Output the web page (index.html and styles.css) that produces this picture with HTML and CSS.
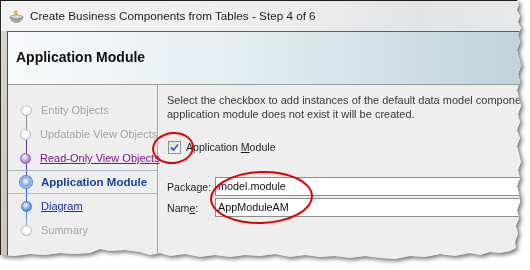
FILE: index.html
```html
<!DOCTYPE html>
<html lang="en">
<head>
  <meta charset="UTF-8" />
  <title>Create Business Components from Tables - Step 4 of 6</title>
  <link rel="stylesheet" href="styles.css">
</head>
<body>
  <div class="shot">
    <div class="window">
      <div class="titlebar">
        <svg class="app-icon" width="15" height="14" viewBox="0 0 15 14">
          <path d="M5 2 Q6 0 8 1 Q7 3 9 4 L6 5 Z" fill="#f2c43a" stroke="#c8901a" stroke-width="0.5"/>
          <ellipse cx="7.5" cy="7" rx="6.5" ry="2" fill="#d8d8d0" stroke="#8a8a80" stroke-width="0.6"/>
          <path d="M1 7 Q2 12 7.5 12.5 Q13 12 14 7 Q11 9 7.5 9 Q4 9 1 7 Z" fill="#a8a89c" stroke="#70706a" stroke-width="0.5"/>
        </svg>
        <span class="title">Create Business Components from Tables - Step 4 of 6</span>
      </div>
      <div class="dialog">
        <div class="header">
          <h1>Application Module</h1>
        </div>
        <div class="main">
          <ul class="steps">
            <li class="todo"><span class="node"><span class="dot"></span></span>Entity Objects</li>
            <li class="todo"><span class="node"><span class="dot"></span></span>Updatable View Objects</li>
            <li class="visited"><span class="node"><span class="dot"></span></span><a href="#">Read-Only View Objects</a></li>
            <li class="current"><span class="node"><span class="dot"></span></span>Application Module</li>
            <li class="done"><span class="node"><span class="dot"></span></span><a href="#">Diagram</a></li>
            <li class="todo"><span class="node"><span class="dot"></span></span>Summary</li>
          </ul>
          <div class="content">
            <p class="intro">Select the checkbox to add instances of the default data model components. If the<br>application module does not exist it will be created.</p>
            <label class="check-row">
              <span class="checkbox">
                <svg width="9" height="9" viewBox="0 0 9 9"><path d="M1 4.5 L3.5 7 L8 1.5" fill="none" stroke="#2f5fc4" stroke-width="1.8"/></svg>
              </span>
              <span>Application <u>M</u>odule</span>
            </label>
            <div class="form">
              <span class="label">Packa<u>g</u>e:</span>
              <div class="field">model.module</div>
              <span class="label">Nam<u>e</u>:</span>
              <div class="field">AppModuleAM</div>
            </div>
          </div>
        </div>
      </div>
    </div>
    <span class="mark mark-check"></span>
    <span class="mark mark-fields"></span>
  </div>
</body>
</html>
```

FILE: styles.css
```css
body {
  margin: 0;
  background: #ffffff;
  font-family: 'Liberation Sans', Arial, sans-serif;
}
.shot {
  position: relative;
  width: 530px;
  height: 270px;
  overflow: hidden;
  filter: drop-shadow(2px 2px 2px rgba(0, 0, 0, 0.55));
}
.window {
  width: 522px;
  height: 262px;
  box-sizing: border-box;
  border-top: 1px solid #1e1e1e;
  border-left: 1px solid #2a2a2a;
  background: linear-gradient(#d9d6d0, #cbc5bc);
  display: flex;
  flex-direction: column;
  clip-path: polygon(0 0, 517px 0, 519px 4px, 517px 10px, 520px 16px, 518px 22px, 521px 28px, 518px 35px, 520px 42px, 517px 50px, 519px 58px, 521px 66px, 518px 74px, 520px 82px, 517px 90px, 519px 98px, 521px 106px, 518px 114px, 520px 122px, 517px 130px, 520px 138px, 517px 146px, 519px 154px, 521px 162px, 518px 170px, 520px 178px, 517px 186px, 519px 194px, 520px 202px, 517px 210px, 519px 218px, 516px 226px, 518px 234px, 515px 242px, 516px 248px, 510px 251px, 500px 253px, 490px 252px, 480px 255px, 470px 253px, 455px 256px, 440px 254px, 425px 257px, 410px 256px, 395px 259px, 380px 258px, 365px 256px, 350px 258px, 335px 256px, 320px 257px, 305px 255px, 290px 257px, 275px 254px, 260px 256px, 245px 255px, 230px 257px, 215px 255px, 200px 257px, 185px 254px, 170px 256px, 160px 253px, 150px 255px, 140px 252px, 125px 250px, 110px 251px, 100px 249px, 90px 253px, 75px 254px, 60px 253px, 45px 255px, 30px 254px, 15px 256px, 0 255px);
}
.titlebar {
  height: 30px;
  display: flex;
  align-items: center;
  padding-left: 8px;
  background: linear-gradient(90deg, #f3f3f3 0%, #eeeeee 55%, #e2e4e6 80%, #e8e9ea 100%);
}
.app-icon {
  margin-top: 1px;
}
.title {
  margin-left: 6px;
  font-size: 11.7px;
  color: #1b1b1b;
  padding-bottom: 2px;
}
.dialog {
  flex: 1;
  margin-left: 6px;
  border-left: 1px solid #4a4a4a;
  border-top: 1px solid #5c5c5c;
  background: #eeeeee;
  display: flex;
  flex-direction: column;
}
.header {
  height: 52px;
  border-bottom: 1px solid #9c9c9c;
  background: linear-gradient(90deg, #f9fafb 0%, #e4edf1 45%, #c0d4dd 100%);
  display: flex;
  align-items: center;
  padding-left: 8px;
}
h1 {
  margin: 0;
  font-size: 14px;
  font-weight: bold;
  color: #111;
  padding-bottom: 2px;
}
.main {
  flex: 1;
  display: flex;
}
.steps {
  list-style: none;
  margin: 0;
  padding: 13px 0 0;
  width: 149px;
  border-right: 1px solid #a6a6a6;
}
.steps li {
  position: relative;
  height: 24px;
  box-sizing: border-box;
  display: flex;
  align-items: center;
  font-size: 11px;
  color: #a6a6a6;
  white-space: nowrap;
}
.steps li::before,
.steps li::after {
  content: '';
  position: absolute;
  left: 18px;
  width: 1px;
}
.steps li::before {
  top: 0;
  height: 50%;
}
.steps li::after {
  top: 50%;
  bottom: 0;
}
.steps li:nth-child(1)::after { background: #8e8e8e; }
.steps li:nth-child(2)::before { background: #8e8e8e; }
.steps li:nth-child(2)::after { background: #6b2b9b; }
.steps li:nth-child(3)::before { background: #6b2b9b; }
.steps li:nth-child(3)::after { background: #5a3cb4; }
.steps li:nth-child(4)::before { background: #4c4cc4; }
.steps li:nth-child(4)::after { background: #3560d2; }
.steps li:nth-child(5)::before { background: #3560d2; }
.steps li:nth-child(5)::after { background: #5a82d6; }
.steps li:nth-child(6)::before { background: #8aa4d8; }
.node {
  position: relative;
  z-index: 1;
  width: 12px;
  height: 12px;
  margin-left: 12px;
  margin-right: 9px;
  display: flex;
  align-items: center;
  justify-content: center;
}
.dot {
  width: 9px;
  height: 9px;
  border-radius: 50%;
  border: 1px solid #bdbdbd;
  background: radial-gradient(circle at 40% 35%, #ffffff 30%, #e2e2e2 100%);
}
.steps a {
  color: inherit;
}
.visited {
  color: #7c1484 !important;
}
.visited .dot {
  border-color: #8a62b6;
  background: radial-gradient(circle at 40% 35%, #efe4f8 10%, #a27fc8 70%, #7c54aa 100%);
}
.current {
  border-top: 1px solid #aab6cc;
  border-bottom: 1px solid #aab6cc;
  color: #1d3f9e !important;
  font-weight: bold;
  font-size: 11.5px !important;
}
.current .dot {
  width: 8px;
  height: 8px;
  border: 2px solid #8eb0ea;
  background: radial-gradient(circle at 45% 40%, #e6efff 15%, #6f98e0 80%);
  box-shadow: 0 0 0 1px #5d86d2;
}
.done {
  color: #1a2ea8 !important;
}
.done .dot {
  border-color: #4a76d2;
  background: radial-gradient(circle at 40% 35%, #dbe7ff 10%, #6a95e4 60%, #3d6ad0 100%);
}
.content {
  flex: 1;
  padding: 8px 0 0 9px;
  overflow: hidden;
}
.intro {
  margin: 0;
  white-space: nowrap;
  font-size: 11px;
  line-height: 14px;
  color: #3a3a3a;
}
.check-row {
  margin-top: 19px;
  height: 14px;
  display: flex;
  align-items: center;
  font-size: 10.6px;
  color: #1e1e1e;
}
.checkbox {
  width: 11px;
  height: 11px;
  margin-left: 1px;
  margin-right: 5px;
  border: 1px solid #8e8f8f;
  background: linear-gradient(135deg, #dcdcdc, #ffffff);
  display: flex;
  align-items: center;
  justify-content: center;
}
.form {
  margin-top: 23px;
  display: grid;
  grid-template-columns: 48px 1fr;
  grid-auto-rows: 19px;
  row-gap: 2px;
  align-items: center;
  font-size: 10.6px;
  color: #1e1e1e;
}
.field {
  height: 19px;
  box-sizing: border-box;
  border: 1px solid #8c8c8c;
  border-right: none;
  background: #ffffff;
  padding-left: 2px;
  line-height: 17px;
  font-size: 10.8px;
  color: #111;
}
.mark {
  position: absolute;
  border: 2px solid #e40000;
  border-radius: 50%;
  box-sizing: border-box;
}
.mark-check {
  left: 152px;
  top: 132px;
  width: 42px;
  height: 32px;
  transform: rotate(-6deg);
}
.mark-fields {
  left: 210px;
  top: 171px;
  width: 103px;
  height: 53px;
  transform: rotate(-2deg);
}
```
